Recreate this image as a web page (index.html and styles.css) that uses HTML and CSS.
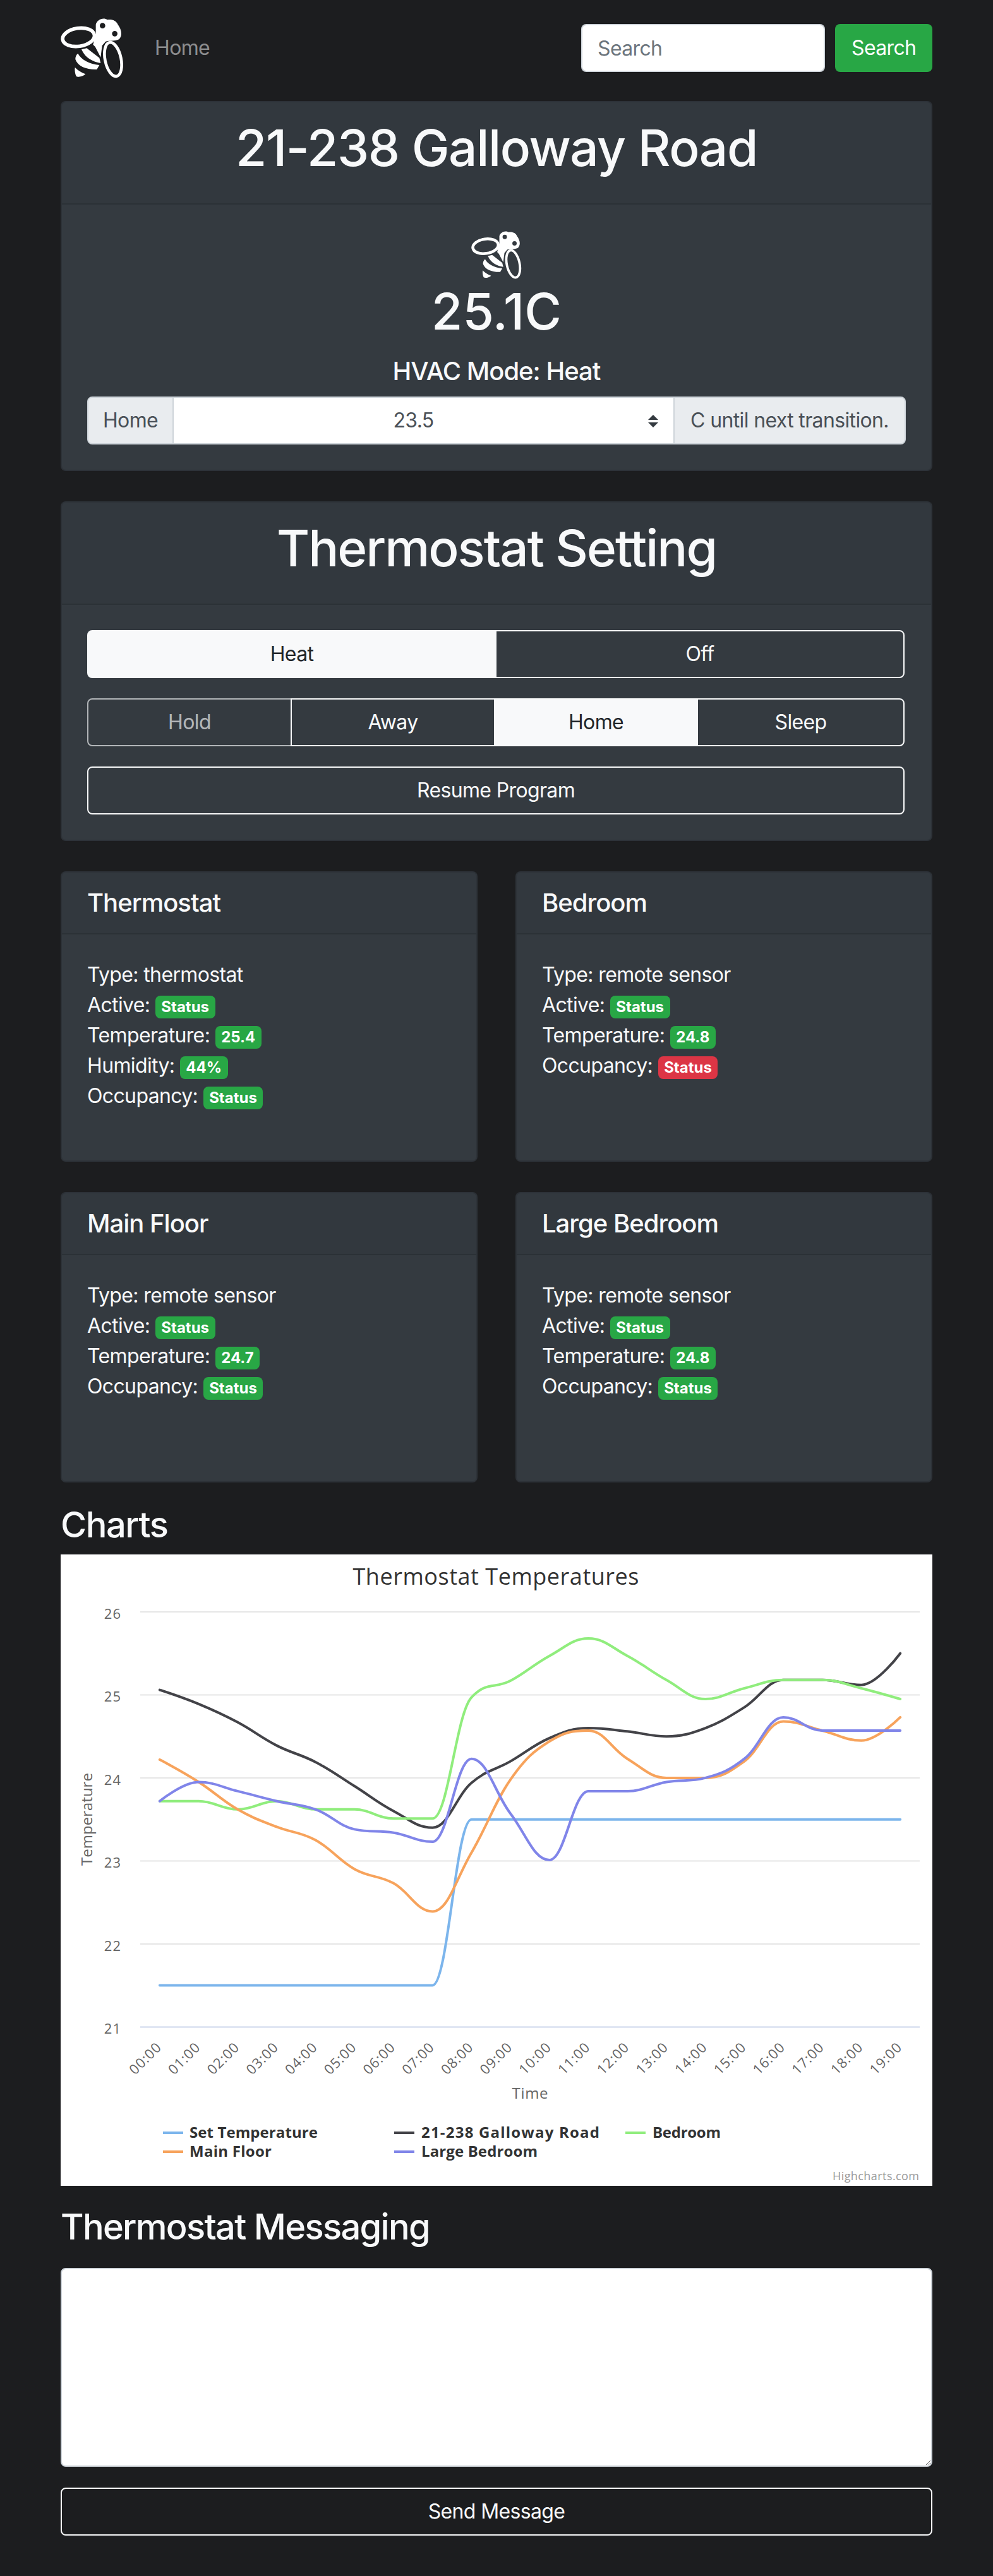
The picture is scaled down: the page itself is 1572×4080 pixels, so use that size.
FILE: index.html
```html
<!DOCTYPE html>
<html>
<head>
    <title>Thermostat</title>
    <link rel="stylesheet" href="styles.css">
</head>
<body>
    <!-- bee logo, used in the navbar and the status card -->
    <svg class="defs" width="0" height="0">
        <symbol id="bee" viewBox="108 55 300 285">
            <ellipse cx="193" cy="145" rx="76" ry="43" transform="rotate(-8 193 145)" fill="none" stroke="#fff" stroke-width="17"/>
            <ellipse cx="357" cy="250" rx="38" ry="82" transform="rotate(-12 357 250)" fill="none" stroke="#fff" stroke-width="14"/>
            <path fill="#fff" fill-rule="evenodd" d="M275,85 C280,62 310,48 330,62 C350,58 372,65 380,85 C395,105 405,135 385,155 C365,165 345,160 322,165 L305,185 L298,240 L272,190 L262,180 L275,130 Z M320,90 A13,13 0 1 0 294,90 A13,13 0 1 0 320,90 Z M378,128 A13,13 0 1 0 352,128 A13,13 0 1 0 378,128 Z"/>
            <path fill="#fff" d="M232,197 L292,243 L298,268 C262,262 225,245 207,203 Z"/>
            <path fill="#fff" d="M190,222 C205,252 245,272 292,277 L280,298 C235,300 190,285 178,250 C177,240 182,228 190,222 Z"/>
            <path fill="#fff" d="M176,288 C190,303 208,313 226,320 C212,333 190,336 182,330 C176,318 174,300 176,288 Z"/>
        </symbol>
    </svg>

    <div class="container">
        <nav class="navbar">
            <svg class="brand"><use href="#bee"/></svg>
            <a class="nav-link" href="#">Home</a>
            <form class="search-form">
                <input class="form-input search-input" type="text" placeholder="Search">
                <button class="btn btn-success" type="button">Search</button>
            </form>
        </nav>

        <div class="card main-card">
            <div class="card-header">
                <h1 class="title address">21-238 Galloway Road</h1>
            </div>
            <div class="card-body center">
                <svg class="status-icon"><use href="#bee"/></svg>
                <h1 class="temp">25.1C</h1>
                <h5 class="hvac">HVAC Mode: Heat</h5>
                <div class="input-group">
                    <span class="addon addon-left">Home</span>
                    <div class="select-wrap">
                        <select class="hold-select">
                            <option>23.5</option>
                        </select>
                        <svg class="select-arrows" width="16" height="20" viewBox="0 0 16 20"><path d="M8 0L16 8H0Z M8 20L0 12H16Z"/></svg>
                    </div>
                    <span class="addon addon-right">C until next transition.</span>
                </div>
            </div>
        </div>

        <div class="card main-card">
            <div class="card-header">
                <h1 class="title">Thermostat Setting</h1>
            </div>
            <div class="card-body">
                <div class="btn-group mode-group">
                    <button class="btn btn-outline active" type="button">Heat</button>
                    <button class="btn btn-outline" type="button">Off</button>
                </div>
                <div class="btn-group climate-group">
                    <button class="btn btn-outline disabled" type="button">Hold</button>
                    <button class="btn btn-outline" type="button">Away</button>
                    <button class="btn btn-outline active" type="button">Home</button>
                    <button class="btn btn-outline" type="button">Sleep</button>
                </div>
                <button class="btn btn-outline btn-block resume-btn" type="button">Resume Program</button>
            </div>
        </div>

        <div class="sensor-grid">
            <div class="card sensor-card">
                <div class="card-header"><h5 class="sensor-name">Thermostat</h5></div>
                <div class="card-body">
                    <div>Type: thermostat</div>
                    <div>Active: <span class="badge badge-success">Status</span></div>
                    <div>Temperature: <span class="badge badge-success">25.4</span></div>
                    <div>Humidity: <span class="badge badge-success">44%</span></div>
                    <div>Occupancy: <span class="badge badge-success">Status</span></div>
                </div>
            </div>
            <div class="card sensor-card">
                <div class="card-header"><h5 class="sensor-name">Bedroom</h5></div>
                <div class="card-body">
                    <div>Type: remote sensor</div>
                    <div>Active: <span class="badge badge-success">Status</span></div>
                    <div>Temperature: <span class="badge badge-success">24.8</span></div>
                    <div>Occupancy: <span class="badge badge-danger">Status</span></div>
                </div>
            </div>
            <div class="card sensor-card">
                <div class="card-header"><h5 class="sensor-name">Main Floor</h5></div>
                <div class="card-body">
                    <div>Type: remote sensor</div>
                    <div>Active: <span class="badge badge-success">Status</span></div>
                    <div>Temperature: <span class="badge badge-success">24.7</span></div>
                    <div>Occupancy: <span class="badge badge-success">Status</span></div>
                </div>
            </div>
            <div class="card sensor-card">
                <div class="card-header"><h5 class="sensor-name">Large Bedroom</h5></div>
                <div class="card-body">
                    <div>Type: remote sensor</div>
                    <div>Active: <span class="badge badge-success">Status</span></div>
                    <div>Temperature: <span class="badge badge-success">24.8</span></div>
                    <div>Occupancy: <span class="badge badge-success">Status</span></div>
                </div>
            </div>
        </div>

        <h3 class="section-title charts-title">Charts</h3>
        <div class="chart-box">
            <svg id="tempChart" width="1380" height="1000" viewBox="0 0 1380 1000">
                <text class="chart-title" x="689" y="48" text-anchor="middle" textLength="453">Thermostat Temperatures</text>

                <g class="grid">
                    <path d="M126 91H1360"/>
                    <path d="M126 222.5H1360"/>
                    <path d="M126 354H1360"/>
                    <path d="M126 485.5H1360"/>
                    <path d="M126 617H1360"/>
                </g>
                <path class="x-axis" d="M126 748.5H1360"/>

                <g class="y-labels" text-anchor="end">
                    <text x="96" y="102">26</text>
                    <text x="96" y="233">25</text>
                    <text x="96" y="365">24</text>
                    <text x="96" y="496">23</text>
                    <text x="96" y="628">22</text>
                    <text x="96" y="759">21</text>
                </g>

                <g class="x-labels" text-anchor="end">
                    <text transform="translate(161 782) rotate(-45)">00:00</text>
                    <text transform="translate(222.7 782) rotate(-45)">01:00</text>
                    <text transform="translate(284.4 782) rotate(-45)">02:00</text>
                    <text transform="translate(346.1 782) rotate(-45)">03:00</text>
                    <text transform="translate(407.8 782) rotate(-45)">04:00</text>
                    <text transform="translate(469.5 782) rotate(-45)">05:00</text>
                    <text transform="translate(531.2 782) rotate(-45)">06:00</text>
                    <text transform="translate(592.9 782) rotate(-45)">07:00</text>
                    <text transform="translate(654.6 782) rotate(-45)">08:00</text>
                    <text transform="translate(716.3 782) rotate(-45)">09:00</text>
                    <text transform="translate(778 782) rotate(-45)">10:00</text>
                    <text transform="translate(839.7 782) rotate(-45)">11:00</text>
                    <text transform="translate(901.4 782) rotate(-45)">12:00</text>
                    <text transform="translate(963.1 782) rotate(-45)">13:00</text>
                    <text transform="translate(1024.8 782) rotate(-45)">14:00</text>
                    <text transform="translate(1086.5 782) rotate(-45)">15:00</text>
                    <text transform="translate(1148.2 782) rotate(-45)">16:00</text>
                    <text transform="translate(1209.9 782) rotate(-45)">17:00</text>
                    <text transform="translate(1271.6 782) rotate(-45)">18:00</text>
                    <text transform="translate(1333.3 782) rotate(-45)">19:00</text>
                </g>

                <text class="axis-title" transform="translate(50 419.5) rotate(-90)" text-anchor="middle">Temperature</text>
                <text class="axis-title" x="743" y="862" text-anchor="middle" textLength="57">Time</text>

                <g id="seriesLines"></g>

                <g class="legend">
                    <path stroke="#7cb5ec" d="M162 916H194"/>
                    <text x="204" y="924" textLength="203">Set Temperature</text>
                    <path stroke="#434348" d="M528 916H560"/>
                    <text x="571" y="924" textLength="282">21-238 Galloway Road</text>
                    <path stroke="#90ed7d" d="M894 916H926"/>
                    <text x="937" y="924" textLength="108">Bedroom</text>
                    <path stroke="#f7a35c" d="M162 946H194"/>
                    <text x="204" y="954" textLength="130">Main Floor</text>
                    <path stroke="#8085e9" d="M528 946H560"/>
                    <text x="571" y="954" textLength="184">Large Bedroom</text>
                </g>

                <text class="credits" x="1359" y="991" text-anchor="end" textLength="137">Highcharts.com</text>
            </svg>
        </div>

        <h3 class="section-title messaging-title">Thermostat Messaging</h3>
        <textarea class="form-input message-box"></textarea>
        <button class="btn btn-outline btn-block send-btn" type="button">Send Message</button>
    </div>

    <script src="chart.js"></script>
</body>
</html>
```

FILE: styles.css
```css
body {
    margin: 0;
    background-color: #1c1d1f;
    color: #f8f9fa;
    font-family: Inter, "Noto Sans", sans-serif;
    font-size: 32px;
    line-height: 48px;
    letter-spacing: -0.02em;
}
h1, h3, h5 {
    margin: 0;
    font-weight: 500;
    letter-spacing: -0.025em;
}
.defs {
    position: absolute;
}
.container {
    max-width: 1380px;
    margin: 0 auto;
    height: 4080px;
}

/* navbar */
.navbar {
    display: flex;
    align-items: center;
    height: 160px;
    padding-bottom: 8px;
    box-sizing: border-box;
}
.brand {
    width: 100px;
    height: 95px;
    margin-right: 49px;
}
.nav-link {
    color: rgba(255, 255, 255, 0.5);
    text-decoration: none;
}
.search-form {
    display: flex;
    gap: 16px;
    margin-left: auto;
}
.form-input {
    box-sizing: border-box;
    background-color: #fff;
    border: 2px solid #ced4da;
    border-radius: 8px;
    color: #495057;
    font: inherit;
    letter-spacing: inherit;
}
.search-input {
    width: 386px;
    height: 76px;
    padding: 12px 24px;
}
.search-input::placeholder {
    color: #6c757d;
}

/* buttons */
.btn {
    box-sizing: border-box;
    height: 76px;
    padding: 12px 24px;
    border: 2px solid transparent;
    border-radius: 8px;
    font: inherit;
    letter-spacing: inherit;
    text-align: center;
}
.btn-success {
    width: 154px;
    background-color: #28a745;
    color: #fff;
}
.btn-outline {
    background-color: transparent;
    border-color: #f8f9fa;
    color: #f8f9fa;
}
.btn-outline.active {
    background-color: #f8f9fa;
    color: #212529;
}
.btn-outline.disabled {
    opacity: 0.65;
}
.btn-block {
    display: block;
    width: 100%;
}
.btn-group {
    display: grid;
    width: 1294px;
    margin-bottom: 32px;
}
.mode-group {
    grid-template-columns: 648px 646px;
}
.climate-group {
    grid-template-columns: 324px 322px 321px 327px;
}
.btn-group .btn {
    border-radius: 0;
    margin-left: -2px;
}
.btn-group .btn:first-child {
    margin-left: 0;
    border-radius: 8px 0 0 8px;
}
.btn-group .btn:last-child {
    border-radius: 0 8px 8px 0;
}
.resume-btn {
    width: 1294px;
}

/* cards */
.card {
    background-color: #343a40;
    border: 2px solid rgba(0, 0, 0, 0.125);
    border-radius: 8px;
    box-sizing: border-box;
}
.main-card {
    margin-bottom: 48px;
}
.card-header {
    padding: 24px 40px;
    background-color: rgba(0, 0, 0, 0.03);
    border-bottom: 2px solid rgba(0, 0, 0, 0.125);
}
.card-body {
    padding: 40px;
}
.center {
    text-align: center;
}
.title {
    margin-bottom: 16px;
    font-size: 80px;
    line-height: 96px;
    text-align: center;
}
.address {
    letter-spacing: -0.017em;
}
.status-icon {
    display: block;
    width: 80px;
    height: 76px;
    margin: 2px auto 3px;
}
.temp {
    margin-bottom: 23px;
    font-size: 80px;
    line-height: 96px;
    letter-spacing: 0;
}
.hvac {
    margin-bottom: 16px;
    font-size: 40px;
    line-height: 48px;
}

/* select row */
.input-group {
    display: flex;
    height: 76px;
}
.addon {
    box-sizing: border-box;
    padding: 12px 0;
    background-color: #e9ecef;
    border: 2px solid #ced4da;
    color: #495057;
    text-align: center;
    white-space: nowrap;
}
.addon-left {
    width: 137px;
    border-radius: 8px 0 0 8px;
}
.addon-right {
    width: 368px;
    border-radius: 0 8px 8px 0;
}
.select-wrap {
    position: relative;
    flex: 1;
    margin: 0 -2px;
}
.hold-select {
    appearance: none;
    width: 100%;
    height: 76px;
    padding: 12px 56px 12px 24px;
    background-color: #fff;
    border: 2px solid #ced4da;
    border-radius: 0;
    color: #495057;
    font: inherit;
    letter-spacing: inherit;
    text-align-last: center;
}
.select-arrows {
    position: absolute;
    top: 29px;
    right: 26px;
    fill: #343a40;
}

/* sensors */
.sensor-grid {
    display: grid;
    grid-template-columns: 660px 660px;
    column-gap: 60px;
    row-gap: 48px;
}
.sensor-card {
    height: 460px;
}
.sensor-name {
    font-size: 40px;
    line-height: 48px;
}
.badge {
    display: inline-block;
    padding: 6px 9.6px;
    border-radius: 8px;
    color: #fff;
    font-size: 24px;
    font-weight: 700;
    line-height: 24px;
    letter-spacing: 0;
    vertical-align: baseline;
}
.badge-success {
    background-color: #28a745;
}
.badge-danger {
    background-color: #dc3545;
}

/* charts */
.section-title {
    font-size: 56px;
    line-height: 67px;
}
.charts-title {
    margin-top: 34px;
    margin-bottom: 13px;
}
.chart-box {
    background-color: #fff;
    height: 1000px;
}
#tempChart {
    display: block;
    font-family: "Open Sans", sans-serif;
    letter-spacing: 0;
}
.chart-title {
    fill: #333;
    font-size: 36px;
}
.grid path {
    stroke: #e6e6e6;
    stroke-width: 2;
}
.x-axis {
    stroke: #ccd6eb;
    stroke-width: 2;
}
.y-labels text, .x-labels text {
    fill: #666;
    font-size: 22px;
    letter-spacing: 1px;
}
.axis-title {
    fill: #666;
    font-size: 24px;
}
.legend path {
    stroke-width: 4;
}
.legend text {
    fill: #333;
    font-size: 24px;
    font-weight: 700;
}
.credits {
    fill: #999;
    font-size: 18px;
}
.series-line {
    fill: none;
    stroke-width: 4;
    stroke-linecap: round;
    stroke-linejoin: round;
}

/* messaging */
.messaging-title {
    margin-top: 32px;
    margin-bottom: 31px;
    letter-spacing: -0.03em;
}
.message-box {
    display: block;
    width: 100%;
    height: 315px;
}
.send-btn {
    margin-top: 33px;
}
```

FILE: chart.js
```js
// hourly readings, same order as the legend
const series = [
    { color: '#7cb5ec', data: [21.5, 21.5, 21.5, 21.5, 21.5, 21.5, 21.5, 21.5, 23.5, 23.5, 23.5, 23.5, 23.5, 23.5, 23.5, 23.5, 23.5, 23.5, 23.5, 23.5] },
    { color: '#434348', data: [25.06, 24.89, 24.67, 24.39, 24.19, 23.9, 23.6, 23.4, 23.94, 24.2, 24.48, 24.6, 24.56, 24.5, 24.6, 24.85, 25.18, 25.18, 25.12, 25.5] },
    { color: '#90ed7d', data: [23.72, 23.72, 23.62, 23.72, 23.62, 23.62, 23.51, 23.51, 24.97, 25.17, 25.47, 25.68, 25.47, 25.18, 24.95, 25.08, 25.18, 25.18, 25.08, 24.95] },
    { color: '#f7a35c', data: [24.22, 23.95, 23.62, 23.41, 23.25, 22.9, 22.73, 22.39, 23.1, 23.98, 24.44, 24.57, 24.23, 24.0, 24.0, 24.2, 24.68, 24.57, 24.45, 24.73] },
    { color: '#8085e9', data: [23.72, 23.95, 23.84, 23.72, 23.62, 23.38, 23.34, 23.23, 24.23, 23.57, 23.01, 23.84, 23.84, 23.95, 24.0, 24.23, 24.73, 24.57, 24.57, 24.57] }
];

function pointX(i) {
    return 156.85 + 61.7 * i;
}

function pointY(v) {
    return 91 + (26 - v) * 131.45;
}

// control points of a point on the spline, smoothing 1.5
function anchors(pts, i) {
    const p = pts[i];
    if (i === 0 || i === pts.length - 1) {
        return { lx: p.x, ly: p.y, rx: p.x, ry: p.y };
    }
    const prev = pts[i - 1];
    const next = pts[i + 1];
    const lx = (1.5 * p.x + prev.x) / 2.5;
    const rx = (1.5 * p.x + next.x) / 2.5;
    let ly = (1.5 * p.y + prev.y) / 2.5;
    let ry = (1.5 * p.y + next.y) / 2.5;

    const correction = ((ry - ly) * (rx - p.x)) / (rx - lx) + p.y - ry;
    ly += correction;
    ry += correction;

    // no overshoot past the neighbours
    if (ly > prev.y && ly > p.y) {
        ly = Math.max(prev.y, p.y);
        ry = 2 * p.y - ly;
    } else if (ly < prev.y && ly < p.y) {
        ly = Math.min(prev.y, p.y);
        ry = 2 * p.y - ly;
    }
    if (ry > next.y && ry > p.y) {
        ry = Math.max(next.y, p.y);
        ly = 2 * p.y - ry;
    } else if (ry < next.y && ry < p.y) {
        ry = Math.min(next.y, p.y);
        ly = 2 * p.y - ry;
    }
    return { lx: lx, ly: ly, rx: rx, ry: ry };
}

function splinePath(data) {
    const pts = data.map((v, i) => ({ x: pointX(i), y: pointY(v) }));
    let d = 'M' + pts[0].x + ' ' + pts[0].y;
    for (let i = 1; i < pts.length; i++) {
        const a = anchors(pts, i - 1);
        const b = anchors(pts, i);
        d += ' C' + a.rx + ' ' + a.ry + ' ' + b.lx + ' ' + b.ly + ' ' + pts[i].x + ' ' + pts[i].y;
    }
    return d;
}

const group = document.getElementById('seriesLines');
series.forEach(s => {
    const line = document.createElementNS('http://www.w3.org/2000/svg', 'path');
    line.setAttribute('class', 'series-line');
    line.setAttribute('stroke', s.color);
    line.setAttribute('d', splinePath(s.data));
    group.appendChild(line);
});
```
